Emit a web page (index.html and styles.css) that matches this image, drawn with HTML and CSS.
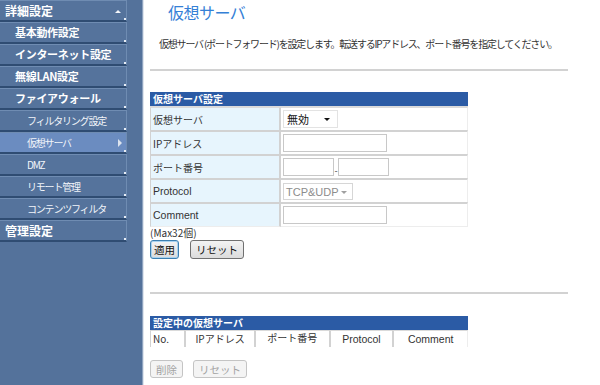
FILE: index.html
```html
<!DOCTYPE html>
<html lang="ja">
<head>
<meta charset="utf-8">
<title>仮想サーバ</title>
<link rel="stylesheet" href="styles.css">
</head>
<body>
<div class="page">
  <nav class="side">
    <div class="item lv0">詳細設定<span class="up"></span></div>
    <div class="item lv1">基本動作設定</div>
    <div class="item lv1">インターネット設定</div>
    <div class="item lv1">無線LAN設定</div>
    <div class="item lv1">ファイアウォール</div>
    <div class="item lv2">フィルタリング設定</div>
    <div class="item lv2 active">仮想サーバ<span class="right"></span></div>
    <div class="item lv2">DMZ</div>
    <div class="item lv2">リモート管理</div>
    <div class="item lv2">コンテンツフィルタ</div>
    <div class="item lv0">管理設定</div>
  </nav>
  <main class="content">
    <h1 class="title">仮想サーバ</h1>
    <p class="desc">仮想サーバ (ポートフォワード)を設定します。転送するIPアドレス、ポート番号を指定してください。</p>
    <div class="rule"></div>
    <table class="form">
      <tr><th colspan="2" class="head">仮想サーバ設定</th></tr>
      <tr>
        <td class="label">仮想サーバ</td>
        <td class="value"><div class="sel"><span>無効</span><i class="caret"></i></div></td>
      </tr>
      <tr>
        <td class="label">IPアドレス</td>
        <td class="value"><input class="txt wide" type="text"></td>
      </tr>
      <tr>
        <td class="label">ポート番号</td>
        <td class="value"><div class="ports"><input class="txt port" type="text"><span class="dash">-</span><input class="txt port" type="text"></div></td>
      </tr>
      <tr>
        <td class="label en">Protocol</td>
        <td class="value"><div class="sel dis"><span>TCP&amp;UDP</span><i class="caret"></i></div></td>
      </tr>
      <tr>
        <td class="label en">Comment</td>
        <td class="value"><input class="txt wide" type="text"></td>
      </tr>
    </table>
    <div class="note">(Max32個)</div>
    <div class="btns">
      <button class="btn focus">適用</button>
      <button class="btn">リセット</button>
    </div>
    <div class="rule rule2"></div>
    <table class="list">
      <tr><th colspan="5" class="head">設定中の仮想サーバ</th></tr>
      <tr class="cols">
        <td class="c-no">No.</td>
        <td class="c-ip">IPアドレス</td>
        <td class="c-port">ポート番号</td>
        <td class="c-proto en">Protocol</td>
        <td class="c-cm en">Comment</td>
      </tr>
    </table>
    <div class="btns btns2">
      <button class="btn" disabled>削除</button>
      <button class="btn" disabled>リセット</button>
    </div>
  </main>
</div>
</body>
</html>
```
FILE: styles.css
```css
html, body {
  margin: 0;
  padding: 0;
  background: #ffffff;
  font-family: "Noto Sans CJK JP", "Liberation Sans", sans-serif;
}
.page {
  display: flex;
  width: 600px;
  height: 385px;
  overflow: hidden;
}
.side {
  width: 142px;
  flex: 0 0 142px;
  background: #54729b;
  border-right: 1px solid #8ea3bf;
  box-shadow: 1px 0 0 #dfe5ee;
  height: 385px;
}
.item {
  position: relative;
  width: 126px;
  height: 19px;
  line-height: 19px;
  border-top: 1px solid #6f8cb2;
  border-right: 1px solid #6f8cb2;
  border-bottom: 2px solid #2f4c72;
  color: #ffffff;
  white-space: nowrap;
  background: #55739c;
}
.item::after {
  content: "";
  position: absolute;
  right: 0;
  bottom: 0;
  width: 2px;
  height: 2px;
  background: #e8eef6;
}
.lv0 {
  padding-left: 5px;
  width: 121px;
  font-size: 12px;
  font-weight: bold;
}
.lv1 {
  padding-left: 15px;
  width: 111px;
  font-size: 11px;
  letter-spacing: -0.3px;
  font-weight: bold;
}
.lv2 {
  padding-left: 27px;
  width: 99px;
  font-size: 10px;
  letter-spacing: -1.2px;
  color: #f2f5fa;
}
.active {
  background: #6b8cc0;
}
.up {
  position: absolute;
  right: 5px;
  top: 9px;
  width: 0;
  height: 0;
  border-left: 3px solid transparent;
  border-right: 3px solid transparent;
  border-bottom: 3px solid #f4f6fa;
}
.right {
  position: absolute;
  right: 4px;
  top: 6px;
  width: 0;
  height: 0;
  border-top: 4px solid transparent;
  border-bottom: 4px solid transparent;
  border-left: 4px solid #dce3ee;
}
.content {
  flex: 1;
  padding-left: 7px;
  color: #333333;
}
.title {
  margin: 0 0 0 18px;
  padding-top: 1px;
  font-size: 16px;
  line-height: 23px;
  font-weight: normal;
  letter-spacing: -0.5px;
  color: #3580d6;
}
.desc {
  margin: 13px 0 0 9px;
  font-size: 10px;
  letter-spacing: -1.2px;
  line-height: 14px;
  white-space: nowrap;
  color: #333333;
}
.rule {
  margin-top: 18px;
  width: 418px;
  height: 2px;
  background: #d2d2d2;
}
table {
  border-collapse: separate;
  border-spacing: 0;
  width: 318px;
  margin-top: 21px;
  font-size: 10px;
}
.head {
  background: #2b5ba5;
  color: #ffffff;
  font-weight: bold;
  text-align: left;
  height: 14px;
  line-height: 14px;
  padding: 0 0 0 3px;
  font-size: 10px;
  border-bottom: 1px solid #dadada;
}
.form td {
  height: 22px;
  border-top: 2px solid #d2d2d2;
  padding: 0;
}
.form tr:nth-child(2) td {
  border-top: 1px solid #dadada;
}
.label {
  width: 126px;
  background: #e7f5fd;
  border-left: 1px solid #d2d2d2;
  border-right: 2px solid #d2d2d2;
  padding-left: 2px !important;
  color: #333333;
}
.value {
  padding-left: 2px !important;
  border-right: 1px solid #ededed;
}
.en {
  font-family: "Liberation Sans", sans-serif;
  font-size: 10.5px;
}
.sel {
  position: relative;
  box-sizing: border-box;
  width: 55px;
  height: 18px;
  line-height: 16px;
  border: 1px solid #e3e3e3;
  padding-left: 3px;
  font-size: 11px;
  color: #111111;
  background: #ffffff;
}
.sel .caret {
  position: absolute;
  right: 7px;
  top: 7px;
  width: 0;
  height: 0;
  border-left: 3px solid transparent;
  border-right: 3px solid transparent;
  border-top: 3px solid #111111;
}
.sel.dis {
  width: 70px;
  height: 17px;
  border-color: #d6d6d6;
  color: #8c8c8c;
  font-family: "Liberation Sans", sans-serif;
  font-size: 11px;
  padding-left: 2px;
}
.sel.dis .caret {
  border-top-color: #a0a0a0;
  right: 5px;
}
.txt {
  display: block;
  box-sizing: border-box;
  height: 18px;
  border: 1px solid #c8c8c8;
  padding: 0;
  margin: 0;
  background: #ffffff;
}
.wide {
  width: 104px;
}
.ports {
  display: flex;
  align-items: flex-end;
}
.port {
  width: 51px;
}
.dash {
  width: 4px;
  text-align: center;
  font-size: 9px;
  line-height: 10px;
  color: #444444;
}
.form tr:last-child td {
  border-bottom: 1px solid #ededed;
}
.note {
  font-size: 10px;
  line-height: 12px;
  margin-top: 0;
  color: #333333;
}
.btns {
  display: flex;
  gap: 11px;
  margin-top: 1px;
}
.btn {
  height: 19px;
  padding: 0 5px;
  font-family: "Noto Sans CJK JP", sans-serif;
  font-size: 10.5px;
  line-height: 15px;
  color: #111111;
  border: 1px solid #707070;
  border-radius: 3px;
  background: linear-gradient(#f3f3f3, #dcdcdc);
}
.btn.focus {
  border-color: #3c7fb1;
  box-shadow: inset 0 0 0 1px #a8d2f0;
  padding: 0 3px;
}
.btn:disabled {
  color: #a3a3a3;
  border-color: #c4c4c4;
  background: #f4f4f4;
}
.rule2 {
  margin-top: 33px;
}
.list {
  margin-top: 22px;
}
.list .head {
  border-bottom: none;
}
.cols td {
  height: 16px;
  line-height: 14px;
  padding: 0;
  text-align: center;
  border-top: 1px solid #dadada;
  border-left: 2px solid #d2d2d2;
  color: #333333;
  background: #ffffff;
}
.cols td:first-child {
  border-left: 1px solid #d2d2d2;
  text-align: left;
  padding-left: 2px;
}
.cols td:last-child {
  border-right: 1px solid #ededed;
}
.c-no { width: 31px; }
.c-ip { width: 69px; }
.c-port { width: 73px; vertical-align: top; }
.c-proto { width: 62px; }
.c-cm { width: 73px; }
.btns2 {
  margin-top: 13px;
  gap: 10px;
}
.btns2 .btn {
  height: 18px;
}
```
